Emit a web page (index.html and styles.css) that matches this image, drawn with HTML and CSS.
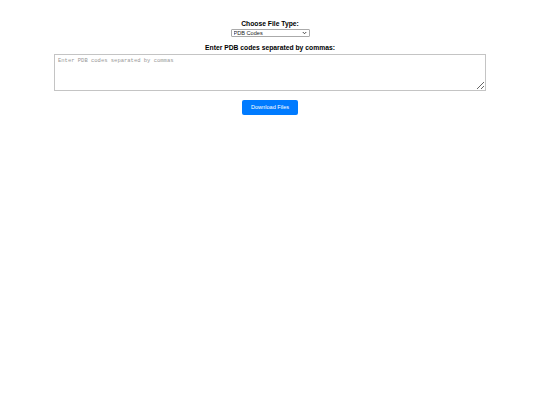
FILE: index.html
```html
<!DOCTYPE html>
<html>
<head>
<meta charset="utf-8">
<link rel="stylesheet" href="styles.css">
</head>
<body>
<main class="page">
  <label class="label" for="type">Choose File Type:</label>
  <span class="select-wrap">
    <select id="type" class="select">
      <option>PDB Codes</option>
    </select>
    <svg class="chev" width="5" height="4" viewBox="0 0 10 8" aria-hidden="true"><path d="M1.5 2 L5 5.5 L8.5 2" fill="none" stroke="#333" stroke-width="1.8"/></svg>
  </span>
  <label class="label label-codes" for="codes">Enter PDB codes separated by commas:</label>
  <textarea id="codes" class="codes" placeholder="Enter PDB codes separated by commas"></textarea>
  <button class="btn" type="button">Download Files</button>
</main>
</body>
</html>
```
FILE: styles.css
```css
html {
  background: #fff;
}
body {
  margin: 0;
  font-family: "Liberation Sans", Arial, sans-serif;
  color: #000;
}
.page {
  display: flex;
  flex-direction: column;
  align-items: center;
  padding-top: 20px;
}
.label {
  font-weight: bold;
  font-size: 6.75px;
  line-height: 8px;
}
.label-codes {
  margin-top: 7px;
}
.select-wrap {
  position: relative;
  display: block;
  width: 79px;
  height: 8px;
  margin-top: 1px;
}
.select {
  -webkit-appearance: none;
  appearance: none;
  box-sizing: border-box;
  display: block;
  width: 100%;
  height: 100%;
  margin: 0;
  padding: 0 0 0 2px;
  border: 1px solid #aaa;
  border-radius: 1px;
  background: #fff;
  color: #222;
  font-family: "Liberation Sans", Arial, sans-serif;
  font-size: 5.6px;
  line-height: 6px;
}
.chev {
  position: absolute;
  right: 3px;
  top: 2px;
  pointer-events: none;
}
.codes {
  box-sizing: border-box;
  display: block;
  width: 80%;
  height: 37px;
  margin-top: 2px;
  padding: 3px;
  border: 1px solid #c4c4c4;
  border-radius: 0;
  font-family: "Liberation Mono", monospace;
  font-size: 5.5px;
  line-height: 6px;
  resize: vertical;
}
.codes::placeholder {
  color: #999;
}
.btn {
  margin-top: 9px;
  padding: 4px 9px;
  background: #007bff;
  color: #fff;
  border: none;
  border-radius: 2px;
  font-family: "Liberation Sans", Arial, sans-serif;
  font-size: 5.6px;
  line-height: 6.5px;
}
```
